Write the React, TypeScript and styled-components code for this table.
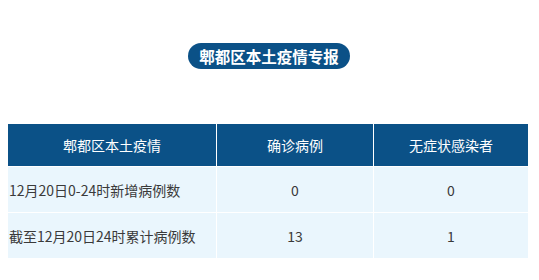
import React from "react";
import styled, { createGlobalStyle } from "styled-components";

const GlobalStyle = createGlobalStyle`
  body {
    margin: 0;
    background: #ffffff;
    font-family: "Microsoft YaHei", "Noto Sans CJK SC", "Noto Sans", sans-serif;
  }
`;

const rows = [
  { label: "12月20日0-24时新增病例数", confirmed: "0", asymptomatic: "0" },
  { label: "截至12月20日24时累计病例数", confirmed: "13", asymptomatic: "1" },
];

function App() {
  return (
    <Page>
      <GlobalStyle />
      <TitleRow>
        <TitlePill>郫都区本土疫情专报</TitlePill>
      </TitleRow>
      <Table>
        <HeaderRow>
          <HeadCell>郫都区本土疫情</HeadCell>
          <HeadCell>确诊病例</HeadCell>
          <HeadCell>无症状感染者</HeadCell>
        </HeaderRow>
        {rows.map((r) => (
          <BodyRow key={r.label}>
            <BodyCell align="left">{r.label}</BodyCell>
            <BodyCell>{r.confirmed}</BodyCell>
            <BodyCell>{r.asymptomatic}</BodyCell>
          </BodyRow>
        ))}
      </Table>
    </Page>
  );
}

const Page = styled.div`
  width: 539px;
  height: 280px;
  padding: 43px 11px 0 8px;
  box-sizing: border-box;
`;

const TitleRow = styled.div`
  display: flex;
  justify-content: center;
  padding-left: 2px;
`;

const TitlePill = styled.div`
  height: 26px;
  line-height: 26px;
  padding: 0 11px;
  border-radius: 13px;
  background: #0b5187;
  color: #ffffff;
  font-size: 15.5px;
  font-weight: bold;
`;

const Table = styled.div`
  margin-top: 55px;
  display: flex;
  flex-direction: column;
  gap: 1px;
  background: #ffffff;
`;

const HeaderRow = styled.div`
  display: grid;
  grid-template-columns: 208px 156px 1fr;
  gap: 1px;
  height: 42px;
`;

const HeadCell = styled.div`
  background: #0b5187;
  color: #ffffff;
  font-size: 14px;
  display: flex;
  align-items: center;
  justify-content: center;
`;

const BodyRow = styled.div`
  display: grid;
  grid-template-columns: 208px 156px 1fr;
  gap: 1px;
  height: 45px;
`;

const BodyCell = styled.div<{ align?: "left" | "center" }>`
  background: #eaf6fd;
  color: #3a3a3a;
  font-size: 14px;
  display: flex;
  align-items: center;
  justify-content: ${(p) => (p.align === "left" ? "flex-start" : "center")};
  padding-left: ${(p) => (p.align === "left" ? "1px" : "0")};
`;

export default App;
